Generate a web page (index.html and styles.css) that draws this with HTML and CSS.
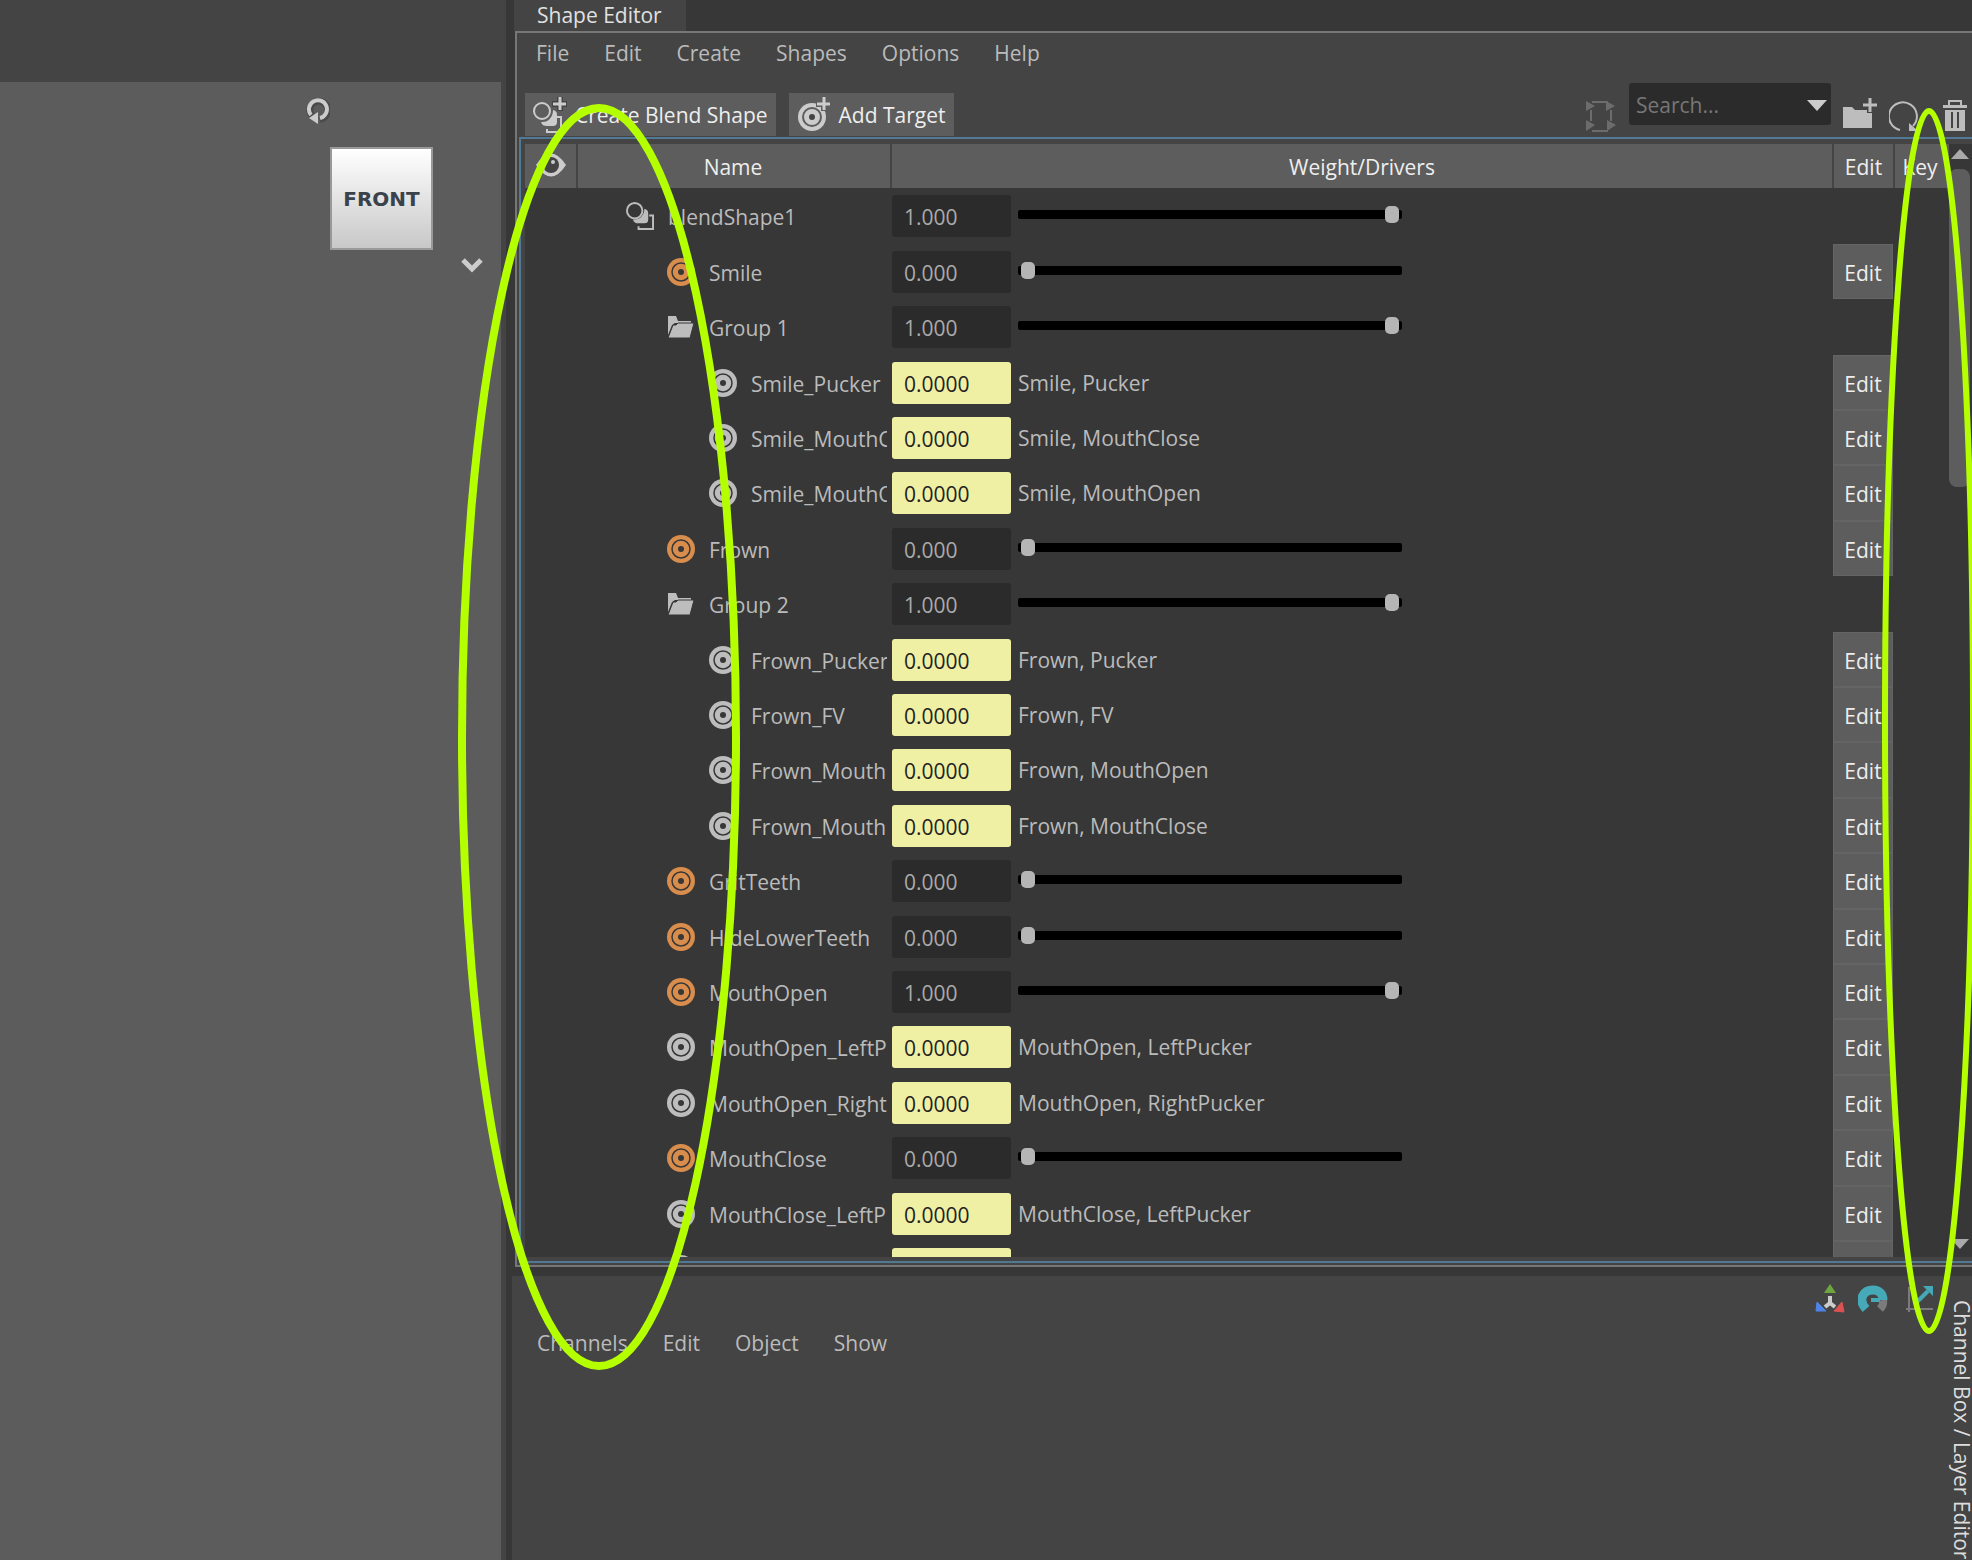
FILE: index.html
```html
<!DOCTYPE html>
<html lang="en">
<head>
    <meta charset="UTF-8">
    <meta name="viewport" content="width=device-width, initial-scale=1.0">
    <title>Shape Editor</title>
    <link rel="stylesheet" href="styles.css">
</head>
<body>
    <!-- shared icons -->
    <svg class="icon-defs" aria-hidden="true">
        <symbol id="icon-blend" viewBox="0 0 29 29">
            <path d="M13 25v3h15V14h-4" fill="none" stroke="currentColor" stroke-width="2"/>
            <path d="M19 7c3 1 4 2 4 5v6q0 4-4 4h-6c-3 0-5-1-6-4 7 1 12-4 12-11z" fill="currentColor"/>
            <circle cx="9" cy="9" r="8" fill="none" stroke="currentColor" stroke-width="2"/>
        </symbol>
        <symbol id="icon-target" viewBox="0 0 28 28">
            <circle cx="14" cy="14" r="14" fill="currentColor"/>
            <circle cx="14" cy="14" r="9" fill="none" stroke="#373737" stroke-width="1.500"/>
            <circle cx="14" cy="14" r="3" fill="#373737"/>
        </symbol>
        <symbol id="icon-folder" viewBox="0 0 28 22">
            <path d="M1 0h8l2 5h13v2H8L5 9 1 19z" fill="currentColor"/>
            <path d="M6 9l3 0 2-2h16l-4 15H1z" fill="currentColor" stroke="#373737" stroke-width="1"/>
        </symbol>
    </svg>

    <main class="app">
        <section class="viewport">
            <div class="scene">
                <div class="navigator">
                    <button class="nav-rotate" aria-label="Rotate view">
                        <svg width="24" height="28" viewBox="0 0 24 28">
                            <path d="M6 18a9 9 0 1 1 8 3" fill="none" stroke="#4a4a4a" stroke-width="7"/>
                            <path d="M5 17A9 9 0 1 1 14 20" fill="none" stroke="#ccc" stroke-width="4"/>
                            <path d="M3 20l9-6v12z" fill="#ccc"/>
                        </svg>
                    </button>
                    <button class="cube">FRONT</button>
                    <button class="nav-menu" aria-label="View menu">
                        <svg width="24" height="17" viewBox="0 0 24 17">
                            <path d="M3 3l9 9 9-9" fill="none" stroke="#ccc" stroke-width="5"/>
                        </svg>
                    </button>
                </div>
            </div>
        </section>

        <section class="side">
            <div class="tabs">
                <button class="tab">Shape Editor</button>
            </div>

            <div class="editor">
                <nav class="menu">
                    <button>File</button>
                    <button>Edit</button>
                    <button>Create</button>
                    <button>Shapes</button>
                    <button>Options</button>
                    <button>Help</button>
                </nav>

                <div class="toolbar">
                    <button class="tool">
                        <svg width="36" height="37" viewBox="0 0 36 37">
                            <path d="M14 32v3h14V20h-4" fill="none" stroke="#ccc" stroke-width="2"/>
                            <path d="M20 13c3 1 4 2 4 5v7q0 4-4 4h-6c-3 0-5-1-6-4 7 1 12-5 12-12z" fill="#ccc"/>
                            <circle cx="9" cy="14" r="8" fill="#5d5d5d" stroke="#ccc" stroke-width="2"/>
                            <path d="M27 0v14M19 7h15" stroke="#444" stroke-width="6"/>
                            <path d="M27 0v13M20 7h13" stroke="#ccc" stroke-width="3"/>
                        </svg>
                        Create Blend Shape
                    </button>
                    <button class="tool">
                        <svg width="36" height="37" viewBox="0 0 36 37">
                            <circle cx="15" cy="20" r="14" fill="#ccc"/>
                            <circle cx="15" cy="20" r="9" fill="none" stroke="#5d5d5d" stroke-width="2"/>
                            <circle cx="15" cy="20" r="3" fill="#444"/>
                            <path d="M27 0v14M19 7h15" stroke="#5d5d5d" stroke-width="6"/>
                            <path d="M27 0v13M20 7h13" stroke="#ccc" stroke-width="3"/>
                        </svg>
                        Add Target
                    </button>

                    <div class="tools-right">
                        <button class="icon-button frame-button" aria-label="Isolate selected">
                            <svg width="32" height="32" viewBox="0 0 32 32">
                                <path d="M7 2h16M7 31h16M6 10v11M26 10v11" fill="none" stroke="#6c6c6c" stroke-width="2"/>
                                <path d="M1 1l9 5-9 5zM21 1l9 5-9 5zM1 20l9 5-9 6zM22 20l9 5-9 6z" fill="#6c6c6c"/>
                            </svg>
                        </button>
                        <div class="search">
                            <input type="text" placeholder="Search..." aria-label="Search">
                            <button aria-label="Search options">
                                <svg width="20" height="11" viewBox="0 0 20 11"><path d="M0 0h20L10 11z" fill="#ccc"/></svg>
                            </button>
                        </div>
                        <button class="icon-button" aria-label="Create group">
                            <svg width="34" height="34" viewBox="0 0 34 34">
                                <path d="M0 9h9l3 3h17v18H0z" fill="#bdbdbd"/>
                                <path d="M27 0v15M19 7h15" stroke="#444" stroke-width="6"/>
                                <path d="M27 0v14M20 7h14" stroke="#bdbdbd" stroke-width="3"/>
                            </svg>
                        </button>
                        <button class="icon-button" aria-label="Refresh">
                            <svg width="38" height="32" viewBox="0 0 38 32">
                                <path d="M11 30A14 14 0 1 1 24 26" fill="none" stroke="#bdbdbd" stroke-width="2"/>
                                <path d="M20 23v8h9z" fill="#bdbdbd"/>
                            </svg>
                        </button>
                        <button class="icon-button" aria-label="Delete">
                            <svg width="24" height="32" viewBox="0 0 24 32">
                                <path d="M6 5V1h12v4" fill="none" stroke="#bdbdbd" stroke-width="2"/>
                                <path d="M0 5h24v3H0zM2 10h20v21H2z" fill="#bdbdbd"/>
                                <path d="M9 12v16M15 12v16" stroke="#444" stroke-width="2"/>
                            </svg>
                        </button>
                    </div>
                </div>

                <div class="frame">
                    <div class="table-wrap">
                        <table class="shapes">
                            <colgroup>
                                <col class="col-eye">
                                <col class="col-name">
                                <col class="col-value">
                                <col>
                                <col class="col-edit">
                                <col class="col-key">
                            </colgroup>
                            <thead>
                                <tr>
                                    <th aria-label="Visibility">
                                        <svg width="30" height="24" viewBox="0 0 30 24">
                                            <path d="M0 12Q15-11 30 12 15 35 0 12z" fill="#ccc"/>
                                            <circle cx="15" cy="12" r="8" fill="#444"/>
                                            <circle cx="17" cy="9" r="2" fill="#ccc"/>
                                        </svg>
                                    </th>
                                    <th class="name-head">Name</th>
                                    <th colspan="2">Weight/Drivers</th>
                                    <th>Edit</th>
                                    <th class="key-head">Key</th>
                                </tr>
                            </thead>
                            <tbody id="rows"></tbody>
                        </table>
                    </div>
                    <div class="scrollbar">
                        <svg width="18" height="10" viewBox="0 0 18 10"><path d="M9 0l9 10H0z" fill="#aaa"/></svg>
                        <div class="scroll-track"><div class="scroll-thumb"></div></div>
                        <svg width="18" height="10" viewBox="0 0 18 10"><path d="M0 0h18L9 10z" fill="#aaa"/></svg>
                    </div>
                </div>
            </div>

            <div class="channel-box">
                <div class="channel-main">
                    <div class="channel-icons">
                        <button class="icon-button" aria-label="Manipulator">
                            <svg width="30" height="30" viewBox="0 0 30 30">
                                <path d="M15 12v9M15 19l-5 4M15 19l5 4" stroke="#ccc" stroke-width="4"/>
                                <path d="M15 0l6 9H9z" fill="#6fa53d"/>
                                <path d="M2 18l9 9H1z" fill="#4d84e8" stroke="#4d84e8"/>
                                <path d="M27 18l2 10-10-1z" fill="#dc5252" stroke="#dc5252"/>
                            </svg>
                        </button>
                        <button class="icon-button" aria-label="Speed">
                            <svg width="30" height="30" viewBox="0 0 30 30">
                                <path d="M25 16q1 5-3 9" fill="none" stroke="#7b7b7b" stroke-width="8"/>
                                <path d="M8 25C-1 15 6 6 15 6c6 0 10 4 10 10" fill="none" stroke="#45a9b8" stroke-width="9"/>
                                <path d="M13 16h9" stroke="#45a9b8" stroke-width="4"/>
                            </svg>
                        </button>
                        <button class="icon-button" aria-label="Graph">
                            <svg width="30" height="30" viewBox="0 0 30 30">
                                <path d="M4 3v25M1 25h27" stroke="#7b7b7b" stroke-width="2"/>
                                <path d="M10 20L23 7" stroke="#45a9b8" stroke-width="4"/>
                                <path d="M18 2h10v10z" fill="#45a9b8"/>
                            </svg>
                        </button>
                    </div>
                    <nav class="menu">
                        <button>Channels</button>
                        <button>Edit</button>
                        <button>Object</button>
                        <button>Show</button>
                    </nav>
                </div>
                <button class="side-tab">Channel Box / Layer Editor</button>
            </div>
        </section>

        <!-- highlighted columns -->
        <svg class="marks" viewBox="0 0 1972 1560" preserveAspectRatio="none" aria-hidden="true">
            <ellipse cx="599" cy="737" rx="137" ry="629" stroke-width="8"/>
            <ellipse cx="1929" cy="721" rx="44" ry="610" stroke-width="6"/>
        </svg>
    </main>

    <script>
        // type, level, name, weight, drivers
        const shapes = [
            ['blend', 0, 'blendShape1', 1],
            ['active', 1, 'Smile', 0],
            ['folder', 1, 'Group 1', 1],
            ['combo', 2, 'Smile_Pucker', 0, 'Smile, Pucker'],
            ['combo', 2, 'Smile_MouthClose', 0, 'Smile, MouthClose'],
            ['combo', 2, 'Smile_MouthOpen', 0, 'Smile, MouthOpen'],
            ['active', 1, 'Frown', 0],
            ['folder', 1, 'Group 2', 1],
            ['combo', 2, 'Frown_Pucker', 0, 'Frown, Pucker'],
            ['combo', 2, 'Frown_FV', 0, 'Frown, FV'],
            ['combo', 2, 'Frown_MouthOpen', 0, 'Frown, MouthOpen'],
            ['combo', 2, 'Frown_MouthClose', 0, 'Frown, MouthClose'],
            ['active', 1, 'GritTeeth', 0],
            ['active', 1, 'HideLowerTeeth', 0],
            ['active', 1, 'MouthOpen', 1],
            ['combo', 1, 'MouthOpen_LeftPucker', 0, 'MouthOpen, LeftPucker'],
            ['combo', 1, 'MouthOpen_RightPucker', 0, 'MouthOpen, RightPucker'],
            ['active', 1, 'MouthClose', 0],
            ['combo', 1, 'MouthClose_LeftPucker', 0, 'MouthClose, LeftPucker'],
            ['combo', 1, 'MouthClose_RightPucker', 0, 'MouthClose, RightPucker']
        ];
        const icons = { blend: 'blend', folder: 'folder', active: 'target', combo: 'target' };

        document.getElementById('rows').innerHTML = shapes.map(([type, level, name, weight, drivers]) => {
            const value = weight.toFixed(drivers ? 4 : 3);
            const editable = type === 'active' || type === 'combo';
            return `<tr>
                <td></td>
                <td><div class="name level-${level}"><svg class="icon icon-${type}"><use href="#icon-${icons[type]}"/></svg><span>${name}</span></div></td>
                <td><input class="value ${drivers ? 'driven' : ''}" type="text" value="${value}" aria-label="${name} weight"></td>
                <td>${drivers ? drivers : `<input class="slider" type="range" min="0" max="1" step="0.001" value="${weight}" aria-label="${name} slider">`}</td>
                <td>${editable ? '<button class="edit">Edit</button>' : ''}</td>
                <td></td>
            </tr>`;
        }).join('');
    </script>
</body>
</html>
```

FILE: styles.css
```css
* {
    box-sizing: border-box;
}
body {
    margin: 0;
    background-color: #444;
    color: #bbb;
    font-family: "Open Sans", "Noto Sans", sans-serif;
    font-size: 21px;
    line-height: 28px;
}
button, input {
    margin: 0;
    padding: 0;
    border: none;
    background: none;
    color: inherit;
    font: inherit;
}
svg {
    display: block;
    flex: none;
}
.icon-defs {
    position: absolute;
    width: 0;
    height: 0;
}
.app {
    position: relative;
    display: flex;
    height: 100vh;
    overflow: hidden;
}

/* 3D viewport */
.viewport {
    flex: none;
    width: 512px;
    padding: 82px 5px 0 0;
    border-right: 6px solid #373737;
    display: flex;
}
.scene {
    flex: 1;
    background-color: #5c5c5c;
}
.navigator {
    display: flex;
    flex-direction: column;
    align-items: flex-start;
    width: 195px;
    margin-left: auto;
    padding: 16px 17px 0 0;
}
.cube {
    width: 103px;
    height: 103px;
    margin: 21px 0 7px 24px;
    border: 2px solid #999;
    background: linear-gradient(#fff, #c8c8c8);
    color: #3a424c;
    font-family: "DejaVu Sans", sans-serif;
    font-size: 20px;
    font-weight: bold;
}
.nav-menu {
    align-self: flex-end;
}

/* right side */
.side {
    flex: 1;
    min-width: 0;
    display: flex;
    flex-direction: column;
    background-color: #373737;
}
.tabs {
    flex: none;
    height: 31px;
    padding-left: 2px;
}
.tab {
    height: 31px;
    padding: 0 24px 2px 23px;
    background-color: #444;
    color: #e0e0e0;
}
.editor {
    flex: 1;
    min-height: 0;
    display: flex;
    flex-direction: column;
    margin-left: 3px;
    margin-bottom: 9px;
    border: 2px solid #777;
    border-right: none;
    background-color: #444;
}
.menu {
    flex: none;
    display: flex;
    gap: 35px;
    height: 40px;
    padding-left: 19px;
}
.toolbar {
    flex: none;
    display: flex;
    gap: 13px;
    align-items: flex-end;
    height: 64px;
    padding: 0 5px 1px 8px;
}
.tool {
    display: flex;
    align-items: center;
    gap: 6px;
    height: 43px;
    padding: 1px 8px 0 8px;
    background-color: #5d5d5d;
    color: #eee;
    white-space: nowrap;
}
.tools-right {
    display: flex;
    align-items: flex-end;
    gap: 12px;
    margin-left: auto;
    padding-bottom: 4px;
}
.icon-button:last-child {
    margin-left: 4px;
}
.search {
    display: flex;
    align-items: center;
    width: 202px;
    height: 42px;
    margin-bottom: 7px;
    padding: 2px 4px 0 7px;
    border-radius: 3px;
    background-color: #2b2b2b;
}
.search input {
    flex: 1;
    min-width: 0;
    outline: none;
}
.search input::placeholder {
    color: #777;
}

/* shape list */
.frame {
    flex: 1;
    min-height: 0;
    display: flex;
    margin-left: 2px;
    padding: 5px 0 4px 4px;
    border: 2px solid #527994;
    border-right: none;
    margin-bottom: 2px;
}
.table-wrap {
    flex: 1;
    min-width: 0;
    overflow: hidden;
    background-color: #373737;
}
.shapes {
    width: 100%;
    table-layout: fixed;
    border-collapse: collapse;
}
.col-eye {
    width: 52px;
}
.col-name {
    width: 314px;
}
.col-value {
    width: 127px;
}
.col-edit {
    width: 61px;
}
.col-key {
    width: 55px;
}
th {
    height: 44px;
    padding: 1px 0 0;
    border-right: 2px solid #444;
    background-color: #5d5d5d;
    color: #eee;
    font-weight: normal;
}
th:last-child {
    border-right: none;
}
th svg {
    margin: 0 auto 4px;
}
th.name-head {
    padding-right: 2px;
}
th.key-head {
    padding-right: 4px;
}
td {
    height: 55px;
    padding: 0;
}
/* rows share out a little over 55px each */
tr:nth-child(5n+1) td, tr:nth-child(5n+3) td {
    height: 56px;
}
.name {
    display: flex;
    align-items: center;
    gap: 14px;
    margin-right: 4px;
    overflow: hidden;
    white-space: nowrap;
}
.name span {
    padding-top: 2px;
}
.level-0 {
    padding-left: 49px;
}
.level-1 {
    padding-left: 90px;
}
.level-2 {
    padding-left: 132px;
}
.icon {
    width: 28px;
    height: 28px;
    color: #bdbdbd;
}
.icon-active {
    color: #d98d4c;
}
.value {
    display: block;
    width: 119px;
    height: 42px;
    margin-left: 1px;
    padding: 2px 0 0 12px;
    border-radius: 3px;
    background-color: #2b2b2b;
    color: #aaa;
}
.driven {
    background-color: #f0f0a4;
    color: #222;
}
.slider {
    -webkit-appearance: none;
    appearance: none;
    display: block;
    width: 384px;
    height: 9px;
    margin-bottom: 3px;
    padding: 0 3px;
    border-radius: 2px;
    background-color: #000;
}
.slider::-webkit-slider-thumb {
    -webkit-appearance: none;
    width: 14px;
    height: 17px;
    border-radius: 5px;
    background-color: #b5b5b5;
}
.edit {
    display: block;
    width: 60px;
    height: 100%;
    padding-top: 2px;
    border: 1px solid #646464;
    background-color: #5d5d5d;
    color: #eee;
}
.scrollbar {
    flex: none;
    display: flex;
    flex-direction: column;
    align-items: center;
    gap: 10px;
    width: 23px;
    padding: 5px 2px 8px 0;
    background-color: #373737;
}
.scroll-track {
    flex: 1;
    width: 100%;
}
.scroll-thumb {
    height: 30%;
    border-radius: 8px;
    background-color: #5d5d5d;
}

/* channel box */
.channel-box {
    flex: none;
    display: flex;
    height: 284px;
    overflow: hidden;
    background-color: #444;
}
.channel-main {
    flex: 1;
}
.channel-icons {
    display: flex;
    justify-content: flex-end;
    gap: 13px;
    padding: 8px 17px 9px 0;
}
.channel-box .menu {
    padding-left: 25px;
}
.side-tab {
    flex: none;
    width: 20px;
    padding-top: 24px;
    color: #ddd;
    line-height: 20px;
    text-align: left;
    white-space: nowrap;
    writing-mode: vertical-rl;
}

.marks {
    position: absolute;
    top: 0;
    left: 0;
    width: 100%;
    height: 100%;
    pointer-events: none;
    fill: none;
    stroke: #b4ff00;
}
```
